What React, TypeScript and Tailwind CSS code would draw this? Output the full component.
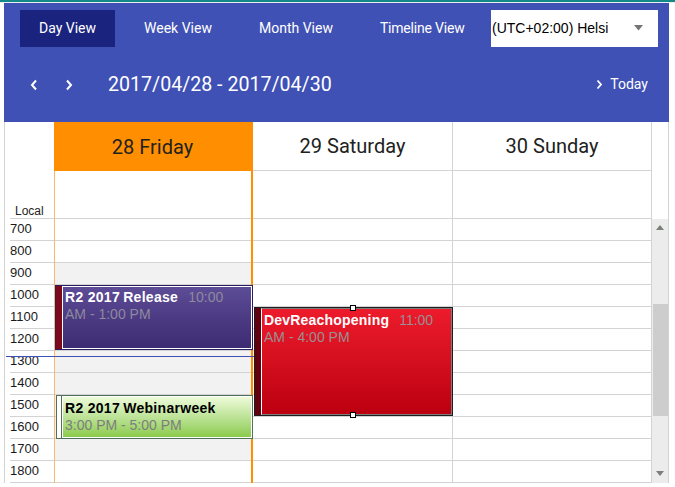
import React from "react";

const hours = ["700", "800", "900", "1000", "1100", "1200", "1300", "1400", "1500", "1600", "1700", "1800"];

export default function App() {
  return (
    <div className="w-[675px] h-[487px] bg-white overflow-hidden font-['Liberation_Sans',Arial,sans-serif]">
      <div className="h-[2px] bg-[#13898a]" />
      <div className="h-[1px] bg-[#e9eef0]" />
      {/* Header */}
      <div className="ml-[4px] w-[665px] h-[119px] bg-[#3f51b5] flex flex-col font-['Roboto',sans-serif] text-white">
        <div className="flex items-center pl-[16px] pt-[7px]">
          <div className="h-[37px] px-[19px] bg-[#1a237e] flex items-center text-[14px]">Day View</div>
          <div className="h-[37px] ml-[10px] px-[19px] flex items-center text-[14px]">Week View</div>
          <div className="h-[37px] ml-[9px] px-[19px] flex items-center text-[14px]">Month View</div>
          <div className="h-[37px] ml-[9px] px-[19px] flex items-center text-[14px] tracking-[-0.2px]">Timeline View</div>
          <div className="ml-auto mr-[11px] w-[167px] h-[37px] bg-white flex items-center relative overflow-hidden">
            <span className="pl-[1px] text-[14px] text-black whitespace-nowrap font-['Liberation_Sans',Arial,sans-serif]">(UTC+02:00) Helsi</span>
            <svg className="absolute left-[143px] top-[15px]" width="9" height="6" viewBox="0 0 9 6">
              <polygon points="0,0 9,0 4.5,5.5" fill="#757575" />
            </svg>
          </div>
        </div>
        <div className="flex-1 flex items-center">
          <svg className="ml-[26px]" width="8" height="12" viewBox="0 0 8 12">
            <polyline points="6,1.5 2,6 6,10.5" fill="none" stroke="white" strokeWidth="2" />
          </svg>
          <svg className="ml-[27px]" width="8" height="12" viewBox="0 0 8 12">
            <polyline points="2,1.5 6,6 2,10.5" fill="none" stroke="white" strokeWidth="2" />
          </svg>
          <div className="ml-[35px] text-[19.6px] leading-[24px]">2017/04/28 - 2017/04/30</div>
          <div className="ml-auto mr-[21px] flex items-center">
            <svg width="7" height="11" viewBox="0 0 7 11">
              <polyline points="1.5,1.5 5,5.5 1.5,9.5" fill="none" stroke="white" strokeWidth="1.8" />
            </svg>
            <span className="ml-[7px] text-[14px]">Today</span>
          </div>
        </div>
      </div>

      {/* Grid */}
      <div className="ml-[4px] w-[665px] border-x border-[#d3d3d3]">
        {/* Header rows */}
        <div className="flex h-[97px]">
          <div className="w-[49px] pl-[5px]">
            <div className="h-full border-b border-[#d3d3d3] flex items-end pl-[5px] text-[12px] leading-[14px] text-[#222]">
              Local
            </div>
          </div>
          <div className="w-[199px] flex flex-col border-r-2 border-[#ff8f00]">
            <div className="h-[49px] bg-[#ff8f00] flex items-center justify-center font-['Roboto',sans-serif] text-[20px] text-[#212121]">
              28 Friday
            </div>
            <div className="h-[48px] border-l border-[#fbb866] border-b-[1px] border-b-[#d3d3d3]" />
          </div>
          <div className="w-[199px] flex flex-col">
            <div className="h-[49px] border-b border-[#d3d3d3] flex items-center justify-center font-['Roboto',sans-serif] text-[20px] text-[#212121]">
              29 Saturday
            </div>
            <div className="h-[48px] border-b border-[#d3d3d3]" />
          </div>
          <div className="w-[199px] flex flex-col border-l border-[#d3d3d3]">
            <div className="h-[49px] border-b border-[#d3d3d3] flex items-center justify-center font-['Roboto',sans-serif] text-[20px] text-[#212121]">
              30 Sunday
            </div>
            <div className="h-[48px] border-b border-[#d3d3d3]" />
          </div>
          <div className="w-[17px] border-l border-[#d3d3d3] bg-white" />
        </div>

        {/* Body */}
        <div className="relative flex">
          <div className="w-[49px] pl-[5px]">
            {hours.map((h) => (
              <div key={h} className="h-[22px] border-b border-[#d3d3d3] pt-[2px] text-[13px] leading-[15px] text-[#1a1a1a]">
                {h}
              </div>
            ))}
          </div>
          <div className="w-[199px] border-l border-[#fbb866] border-r-2 border-r-[#ff8f00]">
            {hours.map((h, i) => (
              <div
                key={h}
                className={`h-[22px] border-b border-[#d3d3d3] ${i >= 2 && i <= 10 ? "bg-[#f2f2f2]" : "bg-white"}`}
              />
            ))}
          </div>
          <div className="w-[199px]">
            {hours.map((h) => (
              <div key={h} className="h-[22px] border-b border-[#d3d3d3]" />
            ))}
          </div>
          <div className="w-[199px] border-l border-[#d3d3d3]">
            {hours.map((h) => (
              <div key={h} className="h-[22px] border-b border-[#d3d3d3]" />
            ))}
          </div>
          <div className="w-[17px] border-l border-[#d3d3d3] bg-[#ececec] relative">
            <svg className="absolute left-[4px] top-[6px]" width="8" height="5" viewBox="0 0 8 5">
              <polygon points="4,0 8,5 0,5" fill="#7a7f78" />
            </svg>
            <div className="absolute left-[1px] top-[85px] w-[15px] h-[112px] bg-[#cdcdcd]" />
            <svg className="absolute left-[4px] top-[252px]" width="8" height="5" viewBox="0 0 8 5">
              <polygon points="0,0 8,0 4,5" fill="#7a7f78" />
            </svg>
          </div>

          {/* current time line */}
          <div className="absolute left-[1px] top-[137px] w-[248px] h-[1px] bg-[#3f51b5]" />

          {/* Release event */}
          <div className="absolute left-[50px] top-[66px] w-[198px] h-[65px] border border-[#2b1d63] flex">
            <div className="w-[6px] bg-[#7b0a1f]" />
            <div className="flex-1 border border-white bg-linear-to-b from-[#5d4c96] to-[#3c2b72] pl-[2px] pt-[2px] text-[14px] leading-[17px]">
              <div className="whitespace-nowrap">
                <span className="font-bold text-white tracking-[0.3px]">R2 2017{"\u2009"}Release</span>
                <span className="ml-[10px] text-[#8d8a9e]">10:00</span>
              </div>
              <div className="text-[#8d8a9e]">AM - 1:00 PM</div>
            </div>
          </div>

          {/* DevReach event */}
          <div className="absolute left-[249px] top-[88px] w-[199px] h-[109px] border border-[#1e1e1e] flex">
            <div className="w-[6px] bg-[#620010]" />
            <div className="flex-1 border border-[#7d7d7d] border-l-white bg-linear-to-b from-[#ec1b2c] to-[#bc000f] pl-[2px] pt-[3px] text-[14px] leading-[17px]">
              <div className="whitespace-nowrap">
                <span className="font-bold text-white tracking-[0.2px]">DevReachopening</span>
                <span className="ml-[10px] text-[#9a8f91]">11:00</span>
              </div>
              <div className="text-[#9a8f91]">AM - 4:00 PM</div>
            </div>
            <div className="absolute left-[95px] top-[-3px] w-[6px] h-[6px] bg-white border border-black" />
            <div className="absolute left-[95px] bottom-[-3px] w-[6px] h-[6px] bg-white border border-black" />
          </div>

          {/* Webinar event */}
          <div className="absolute left-[51px] top-[176px] w-[197px] h-[44px] border border-[#52705a] flex">
            <div className="w-[5px] bg-white border-r border-[#52705a]" />
            <div className="flex-1 border border-white bg-linear-to-b from-[#eefad9] to-[#8ccb4b] pl-[2px] pt-[3px] text-[14px] leading-[17px]">
              <div className="whitespace-nowrap font-bold text-black tracking-[0.3px]">R2 2017{"\u2009"}Webinarweek</div>
              <div className="text-[#7d7d7d]">3:00 PM - 5:00 PM</div>
            </div>
          </div>
        </div>
      </div>
    </div>
  );
}
